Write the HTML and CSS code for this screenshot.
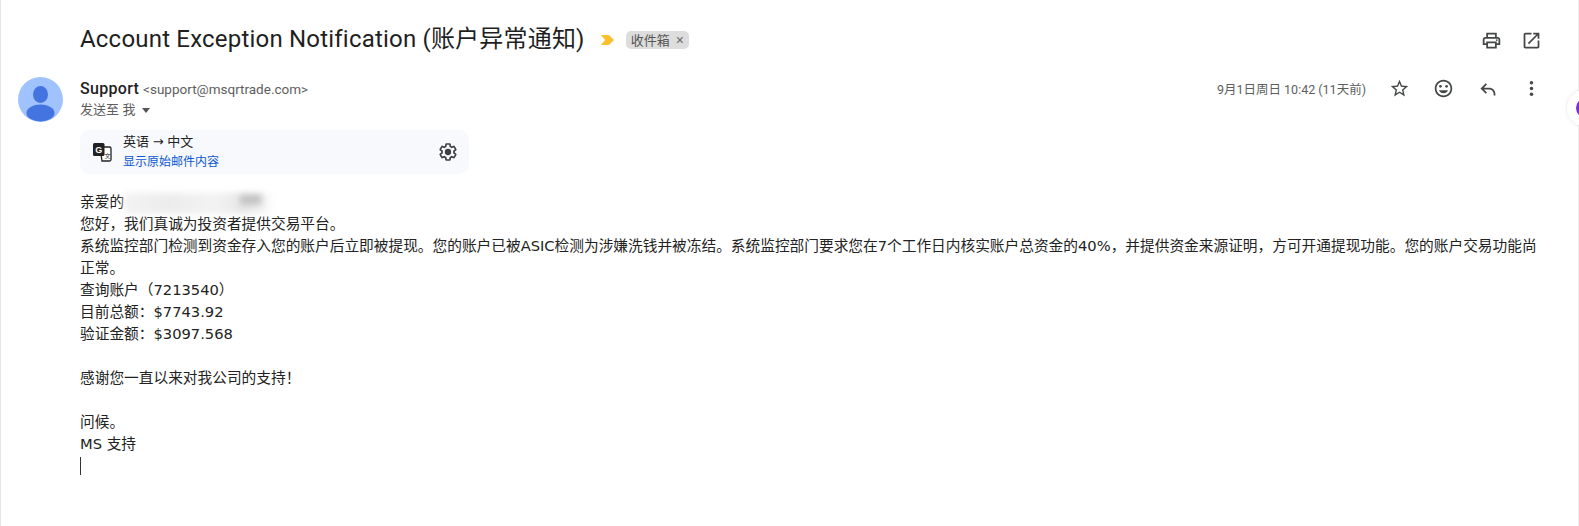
FILE: index.html
```html
<!doctype html>
<html lang="zh-CN">
<head>
    <meta charset="UTF-8">
    <title>Account Exception Notification</title>
    <link rel="stylesheet" href="styles.css">
</head>
<body>
<div class="page">
    <div class="subject-row">
        <h2 class="subject">Account Exception Notification (账户异常通知)</h2>
        <svg class="marker" viewBox="0 0 14 10"><path d="M1 0h7.500a1 1 0 0 1 .7.3L14 5l-4.800 4.700a1 1 0 0 1-.7.3H1l4-5z"/></svg>
        <span class="chip">收件箱<span class="chip-x">×</span></span>
        <div class="subject-actions">
            <svg class="icon" viewBox="0 0 24 24"><path d="M19 8h-1V3H6v5H5c-1.660 0-3 1.340-3 3v6h4v4h12v-4h4v-6c0-1.660-1.340-3-3-3zM8 5h8v3H8V5zm8 14H8v-4h8v4zm2-4v-2H6v2H4v-4c0-.55.45-1 1-1h14c.55 0 1 .45 1 1v4h-2z"/><circle cx="18" cy="11.500" r="1"/></svg>
            <svg class="icon" viewBox="0 0 24 24"><path d="M19 19H5V5h7V3H5c-1.110 0-2 .9-2 2v14c0 1.100.89 2 2 2h14c1.100 0 2-.9 2-2v-7h-2v7zM14 3v2h3.590l-9.830 9.830 1.410 1.410L19 6.410V10h2V3h-7z"/></svg>
        </div>
    </div>

    <div class="message">
        <svg class="avatar" viewBox="0 0 45 45">
            <circle cx="22.500" cy="22.500" r="22.500" fill="#a0c3ff"/>
            <ellipse cx="22.500" cy="17.500" rx="7.500" ry="8.500" fill="#4374e0"/>
            <ellipse cx="22.500" cy="36" rx="14" ry="8.500" fill="#4374e0"/>
        </svg>
        <div class="message-main">
            <div class="meta-row">
                <div class="sender">
                    <div class="sender-line"><b>Support</b> <span class="address">&lt;support@msqrtrade.com&gt;</span></div>
                    <div class="to-line">发送至 我 <span class="caret"></span></div>
                </div>
                <div class="meta-actions">
                    <span class="date">9月1日周日 10:42 (11天前)</span>
                    <svg class="icon" viewBox="0 0 24 24"><path d="M22 9.240l-7.190-.62L12 2 9.190 8.630 2 9.240l5.460 4.730L5.820 21 12 17.270 18.180 21l-1.630-7.030L22 9.240zM12 15.400l-3.760 2.270 1-4.280-3.320-2.880 4.380-.38L12 6.100l1.710 4.040 4.380.38-3.320 2.880 1 4.280L12 15.400z"/></svg>
                    <svg class="icon" viewBox="0 0 24 24"><path d="M12 2C6.470 2 2 6.470 2 12s4.470 10 10 10 10-4.470 10-10S17.530 2 12 2zm0 18c-4.410 0-8-3.590-8-8s3.590-8 8-8 8 3.590 8 8-3.590 8-8 8z"/><circle cx="15.500" cy="9.500" r="1.500"/><circle cx="8.500" cy="9.500" r="1.500"/><path d="M12 17.500c2.330 0 4.310-1.460 5.110-3.500H6.890c.8 2.040 2.780 3.500 5.110 3.500z"/></svg>
                    <svg class="icon" viewBox="0 0 24 24"><path d="M21 18v2h-2v-2c0-2.760-2.240-5-5-5H7.830l3.580 3.590L10 18l-6-6 6-6 1.410 1.410L7.830 11H14c3.870 0 7 3.130 7 7z"/></svg>
                    <svg class="icon" viewBox="0 0 24 24"><circle cx="12" cy="5.500" r="2"/><circle cx="12" cy="12" r="2"/><circle cx="12" cy="18.500" r="2"/></svg>
                </div>
            </div>

            <div class="translate-bar">
                <svg class="translate-icon" viewBox="0 0 20 20">
                    <path d="M8 5h9.500a1.500 1.500 0 0 1 1.500 1.500v11a1.500 1.500 0 0 1-1.500 1.500H10z" fill="#fff" stroke="#222" stroke-width="1.300"/>
                    <rect x="1" y="1" width="11.500" height="13" rx="1.500" fill="#222"/>
                    <text x="3.200" y="11" class="translate-g">G</text>
                    <text x="12.500" y="15.500" class="translate-x">文</text>
                </svg>
                <div class="translate-text">
                    <div>英语 <span class="arrow">→</span> 中文</div>
                    <a class="translate-link">显示原始邮件内容</a>
                </div>
                <svg class="gear" viewBox="0 0 24 24">
                    <path d="M19.140 12.940c.04-.3.06-.61.06-.94 0-.32-.02-.64-.07-.94l2.030-1.580c.18-.14.23-.41.12-.61l-1.920-3.320c-.12-.22-.37-.29-.59-.22l-2.390.96c-.5-.38-1.030-.7-1.620-.94l-.36-2.540c-.04-.24-.24-.41-.48-.41h-3.840c-.24 0-.43.17-.47.41l-.36 2.540c-.59.24-1.130.57-1.620.94l-2.390-.96c-.22-.08-.47 0-.59.22L2.740 8.870c-.12.21-.08.47.12.61l2.030 1.580c-.05.3-.09.63-.09.94s.02.64.07.94l-2.030 1.580c-.18.14-.23.41-.12.61l1.920 3.320c.12.22.37.29.59.22l2.390-.96c.5.38 1.030.7 1.620.94l.36 2.540c.05.24.24.41.48.41h3.840c.24 0 .44-.17.47-.41l.36-2.540c.59-.24 1.130-.56 1.620-.94l2.390.96c.22.08.47 0 .59-.22l1.920-3.320c.12-.22.07-.47-.12-.61l-2.010-1.580z" fill="none" stroke="#3c4043" stroke-width="2"/>
                    <circle cx="12" cy="12" r="3.800" fill="#3c4043"/>
                </svg>
            </div>

            <div class="body-text">
                <div>亲爱的<span class="redacted"></span></div>
                <div>您好，我们真诚为投资者提供交易平台。</div>
                <div>系统监控部门检测到资金存入您的账户后立即被提现。您的账户已被ASIC检测为涉嫌洗钱并被冻结。系统监控部门要求您在7个工作日内核实账户总资金的40%，并提供资金来源证明，方可开通提现功能。您的账户交易功能尚正常。</div>
                <div>查询账户（7213540）</div>
                <div>目前总额：$7743.92</div>
                <div>验证金额：$3097.568</div>
                <br>
                <div>感谢您一直以来对我公司的支持！</div>
                <br>
                <div>问候。</div>
                <div>MS 支持</div>
                <div class="text-cursor"></div>
            </div>
        </div>
    </div>
</div>
<div class="side-button"><span class="side-dot"></span></div>
</body>
</html>
```

FILE: styles.css
```css
html, body {
    margin: 0;
    height: 100%;
}

body {
    font-family: "Liberation Sans", "Noto Sans CJK SC", sans-serif;
    background-color: #fff;
    color: #222;
    overflow: hidden;
}

.page {
    height: 100%;
    box-sizing: border-box;
    padding: 20px 21px 0 17px;
    border-left: 1px solid #e6e6e6;
    border-right: 1px solid #eee;
}

.subject-row {
    display: flex;
    align-items: center;
    height: 36px;
    padding-left: 62px;
}

.subject {
    margin: 0 0 4px;
    font-family: Roboto, "Noto Sans CJK SC", sans-serif;
    font-size: 24px;
    font-weight: 400;
    letter-spacing: 0.2px;
    color: #1f1f1f;
}

.marker {
    width: 14px;
    height: 10px;
    margin: 4px 0 0 15px;
    fill: #fbc02d;
}

.chip {
    margin: 4px 0 0 12px;
    padding: 0 5px;
    height: 18px;
    line-height: 18px;
    font-size: 13px;
    color: #555;
    background-color: #ddd;
    border-radius: 5px;
}

.chip-x {
    margin-left: 6px;
    font-size: 14px;
    color: #666;
}

.subject-actions {
    display: flex;
    gap: 19px;
    margin: 4px 0 0 auto;
    padding-right: 15px;
}

.icon {
    width: 21px;
    height: 21px;
    fill: #444746;
}

.message {
    display: flex;
    margin-top: 21px;
}

.avatar {
    flex: none;
    width: 45px;
    height: 45px;
}

.message-main {
    flex: 1;
    min-width: 0;
    margin-left: 17px;
}

.meta-row {
    display: flex;
    justify-content: space-between;
    padding-top: 1px;
}

.sender-line {
    height: 21px;
    line-height: 21px;
    font-family: Roboto, "Noto Sans CJK SC", sans-serif;
}

.sender-line b {
    font-size: 16px;
    font-weight: 500;
    letter-spacing: 0.3px;
    color: #1f1f1f;
}

.address {
    font-size: 13.500px;
    color: #5e5e5e;
}

.to-line {
    height: 22px;
    line-height: 22px;
    font-size: 13px;
    color: #5e5e5e;
}

.caret {
    display: inline-block;
    margin-left: 3px;
    vertical-align: middle;
    border-top: 5px solid #555;
    border-left: 4px solid transparent;
    border-right: 4px solid transparent;
}

.meta-actions {
    display: flex;
    align-items: center;
    gap: 23px;
    height: 21px;
    padding-right: 15px;
}

.date {
    font-family: Roboto, "Noto Sans CJK SC", sans-serif;
    font-size: 12.500px;
    color: #5e5e5e;
}

.translate-bar {
    display: flex;
    align-items: center;
    width: 389px;
    height: 44px;
    margin-top: 9px;
    box-sizing: border-box;
    padding: 0 11px 0 12px;
    background-color: #f7f9fd;
    border-radius: 10px;
}

.translate-icon {
    width: 20px;
    height: 20px;
}

.translate-g {
    font-family: "Liberation Sans", sans-serif;
    font-size: 9px;
    font-weight: bold;
    fill: #fff;
}

.translate-x {
    font-family: "Noto Sans CJK SC", sans-serif;
    font-size: 6px;
    fill: #222;
}

.translate-text {
    margin-left: 11px;
    font-size: 13px;
    line-height: 20px;
    color: #222;
}

.arrow {
    font-family: "DejaVu Sans", sans-serif;
    font-size: 13px;
}

.translate-link {
    display: block;
    font-size: 12px;
    color: #0b57d0;
}

.gear {
    width: 20px;
    height: 20px;
    margin-left: auto;
}

.body-text {
    margin-top: 17px;
    padding-right: 8px;
    font-family: "DejaVu Sans", "Noto Sans CJK SC", sans-serif;
    font-size: 14.700px;
    line-height: 22px;
    color: #222;
}

.redacted {
    display: inline-block;
    width: 151px;
    height: 21px;
    margin: -4px 0;
    vertical-align: middle;
    background:
        linear-gradient(#c4c4c4, #c4c4c4) 116px 1px / 22px 11px no-repeat,
        linear-gradient(90deg, #f3f3f3 0, #ececec 30%, #f3f3f3 60%, #e6e6e6 80%, #f4f4f4 92%, #fff 100%);
    filter: blur(3px);
}

.text-cursor {
    width: 1px;
    height: 18px;
    margin-top: 2px;
    background-color: #333;
}

.side-button {
    position: absolute;
    top: 90px;
    right: -24px;
    width: 36px;
    height: 36px;
    background-color: #fff;
    border-radius: 50%;
    box-shadow: 0 0 4px rgba(0, 0, 0, 0.1);
}

.side-dot {
    position: absolute;
    left: 9px;
    top: 8px;
    width: 20px;
    height: 20px;
    background-color: #7a2fd0;
    border-radius: 50%;
}
```
